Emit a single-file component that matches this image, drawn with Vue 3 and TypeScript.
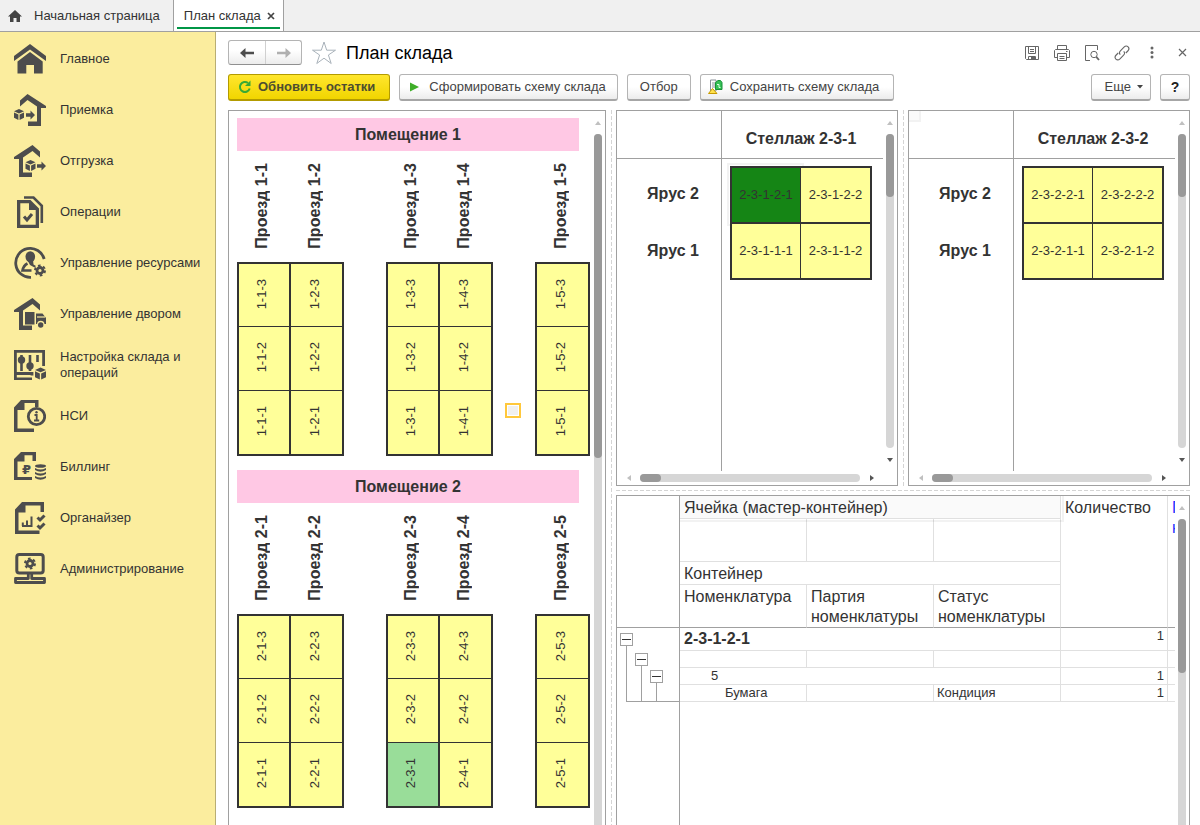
<script setup lang="ts">
interface MenuItem {
  label: string
  icon: string
}

interface Aisle {
  name: string
  cells: string[]
}

interface Room {
  name: string
  groups: Aisle[][]
}

interface Rack {
  name: string
  tiers: { name: string; cells: string[] }[]
}

const box =
  'M5 0L10 2.2L5 4.4L0 2.2ZM0 3.4L4.4 5.4V11L0 8.8ZM10 3.4L5.6 5.4V11L10 8.8Z'
const yard = '<path d="M18.5 0L26 6.5V12.5L18.5 6L9 12.5V27.5H18V32H5V14H0V12Z"/>'

const gear = (x: number, y: number, r: number): string => {
  const step = (2 * Math.PI * (r + 1)) / 6
  return (
    `<circle cx="${x}" cy="${y}" r="${r - 1}" fill="none" stroke="#4d4d4d" stroke-width="2.8"/>` +
    `<circle cx="${x}" cy="${y}" r="${r + 1}" fill="none" stroke="#4d4d4d" stroke-width="2" stroke-dasharray="${step / 2} ${step / 2}"/>`
  )
}

const menu: MenuItem[] = [
  {
    label: 'Главное',
    icon: '<path d="M16 1L32 13V18L16 6.5L0 18V13Z"/><path d="M16 9L28.7 18.5V30.5H20V22H12.3V30.5H3.5V18.5Z"/>',
  },
  {
    label: 'Приемка',
    icon:
      '<path d="M13.5 0L32 12V14H27V32H14V27.5H23V12.5L13.5 6L6 12.5V6.5Z"/>' +
      `<path transform="translate(0 15)" d="${box}"/>` +
      '<path d="M12 19.3H16.5V16.5L21 21L16.5 25.5V22.7H12Z"/>',
  },
  {
    label: 'Отгрузка',
    icon:
      yard +
      `<path transform="translate(11.5 15)" d="${box}"/>` +
      '<path d="M23 19.3H27.5V16.5L32 21L27.5 25.5V22.7H23Z"/>',
  },
  {
    label: 'Операции',
    icon:
      '<path fill-rule="evenodd" d="M3 4H16.5L25 12.5V32H3ZM6.3 7.3V28.7H21.7V14H15V7.3Z"/>' +
      '<path d="M10 1.5H19.5L27.8 9.8V27" fill="none" stroke="#4d4d4d" stroke-width="2.6"/>' +
      '<path d="M10 20.5L13 24L18 18" fill="none" stroke="#4d4d4d" stroke-width="3"/>',
  },
  {
    label: 'Управление ресурсами',
    icon:
      '<path d="M30.2 12A14.5 14.5 0 1 0 17 30.4" fill="none" stroke="#4d4d4d" stroke-width="2.8"/>' +
      '<ellipse cx="16.3" cy="9.8" rx="4.8" ry="5.6"/><path d="M13.5 13H19L19.5 17.5L22 19L20.5 20.5L16 18Z"/>' +
      '<path d="M13.5 16.5Q9.500 18.500 8.500 23.500H17.500" fill="none" stroke="#4d4d4d" stroke-width="2.6"/>' +
      gear(26, 23.5, 4),
  },
  {
    label: 'Управление двором',
    icon:
      yard +
      '<path d="M11 14H20.5V26.5H11ZM22 15.5H28.5L32 20V26H30.5A3.8 3.8 0 0 0 23 26H22Z"/>' +
      '<path d="M23 19H31" stroke="#fbed9e" stroke-width="1.2"/><circle cx="26.7" cy="27" r="2.7"/>',
  },
  {
    label: 'Настройка склада и операций',
    icon:
      '<path d="M18 26.500V24.500H1.400V2.400H29.600V17M1.400 24V30" fill="none" stroke="#4d4d4d" stroke-width="2.800"/>' +
      '<path d="M0 28.500H18V31H0Z"/><path d="M7.500 6V22M16 6V22M23.500 6V13" stroke="#4d4d4d" stroke-width="2.600"/>' +
      '<circle cx="7.500" cy="11" r="3.700"/><circle cx="16" cy="17" r="3.700"/>' +
      `<path transform="translate(21 18.5) scale(1.1)" d="${box}"/>`,
  },
  {
    label: 'НСИ',
    icon:
      '<path d="M7 0H24.5V7H21V3H10.5V10H3.5V28.5H20V32H0V7.5Z"/>' +
      '<circle cx="22.5" cy="16.5" r="8.2" fill="none" stroke="#4d4d4d" stroke-width="2.8"/>' +
      '<path d="M20.5 15H22.7V20.5M20 20.5H25.2" fill="none" stroke="#4d4d4d" stroke-width="1.8"/><circle cx="22.5" cy="12.3" r="1.2"/>',
  },
  {
    label: 'Биллинг',
    icon:
      '<path d="M7 1H22V10H18.500V4.300H10.500V10.500H3.500V26H18V29H0V8Z"/>' +
      '<text x="8" y="22.5" font-size="13" font-weight="bold" font-family="DejaVu Sans, sans-serif">₽</text>' +
      '<ellipse cx="26.500" cy="15" rx="5.500" ry="1.800"/>' +
      '<path d="M21 17Q26.500 20 32 17V19Q26.500 22.500 21 19ZM21 21Q26.500 24 32 21V23Q26.500 26.500 21 23ZM21 25Q26.500 28 32 25V27Q26.500 30.500 21 27Z"/>',
  },
  {
    label: 'Органайзер',
    icon:
      '<path d="M8 0H30V10H26.5V3.500H11.500V10.500H4.500V28.500H25.500V32H1V7.500Z"/>' +
      '<path d="M8 24H17.500V14.500M13 24V18.500M8.800 24V20.500" fill="none" stroke="#4d4d4d" stroke-width="2"/>' +
      '<path d="M23.500 15.500L26 18L30.500 13.500M23.500 23.500L26 26L30.500 21.500" fill="none" stroke="#4d4d4d" stroke-width="3"/>',
  },
  {
    label: 'Администрирование',
    icon:
      '<rect x="2.800" y="1.500" width="26.400" height="18.500" rx="2.500" fill="none" stroke="#4d4d4d" stroke-width="3"/>' +
      gear(16, 10.5, 4) +
      '<path d="M14.300 20V25.500H1.500V29.500H30.500V25.500H17.700V20" fill="none" stroke="#4d4d4d" stroke-width="2.800" stroke-linejoin="round"/>',
  },
]

const makeRoom = (n: number): Room => ({
  name: `Помещение ${n}`,
  groups: [[1, 2], [3, 4], [5]].map((aisles) =>
    aisles.map((a) => ({
      name: `Проезд ${n}-${a}`,
      cells: [3, 2, 1].map((c) => `${n}-${a}-${c}`),
    })),
  ),
})

const makeRack = (id: string): Rack => ({
  name: `Стеллаж ${id}`,
  tiers: [2, 1].map((t) => ({
    name: `Ярус ${t}`,
    cells: [1, 2].map((c) => `${id}-${t}-${c}`),
  })),
})

const rooms: Room[] = [makeRoom(1), makeRoom(2)]
const racks: Rack[] = [makeRack('2-3-1'), makeRack('2-3-2')]
const selectedSection = '2-3-1'
const selectedCell = '2-3-1-2-1'
</script>

<template>
  <div class="app">
    <nav class="tabs" aria-label="Вкладки">
      <button class="tab" type="button">
        <svg class="home" viewBox="0 0 14 12" width="14" height="12" aria-hidden="true">
          <path d="M7 0L14 6.500H12V12H8.500V8H5.500V12H2V6.500H0Z" fill="#444" />
        </svg>
        Начальная страница
      </button>
      <button class="tab active" type="button">
        План склада
        <svg viewBox="0 0 8 8" width="8" height="8" aria-hidden="true">
          <path d="M1 1L7 7M7 1L1 7" stroke="#444" stroke-width="1.700" />
        </svg>
      </button>
    </nav>

    <div class="body">
      <aside class="sidebar">
        <a v-for="item in menu" :key="item.label" class="menu-item" href="#">
          <svg viewBox="0 0 32 32" width="32" height="32" fill="#4d4d4d" aria-hidden="true" v-html="item.icon"></svg>
          <span>{{ item.label }}</span>
        </a>
      </aside>

      <main class="main">
        <header class="header">
          <div class="history">
            <button type="button" aria-label="Назад">
              <svg viewBox="0 0 14 10" width="14" height="10">
                <path d="M0 5L5.500 0V3.700H14V6.300H5.500V10Z" fill="#4d4d4d" />
              </svg>
            </button>
            <button type="button" aria-label="Вперед">
              <svg viewBox="0 0 14 10" width="14" height="10">
                <path d="M14 5L8.500 0V3.700H0V6.300H8.500V10Z" fill="#b0b0b0" />
              </svg>
            </button>
          </div>
          <button class="plain star" type="button" aria-label="Избранное">
            <svg viewBox="0 0 24 24" width="24" height="24">
              <path
                d="M12 1L14.700 9.200H23.500L16.400 14L19.200 22.500L12 17.200L4.800 22.500L7.600 14L.500 9.200H9.300Z"
                fill="none"
                stroke="#a9b2ba"
              />
            </svg>
          </button>
          <h1>План склада</h1>
          <div class="tools">
            <button class="plain" type="button" aria-label="Сохранить">
              <svg viewBox="0 0 16 16" width="16" height="16" fill="none" stroke="#666">
                <path d="M1.500 1.500H14.500V14.500H2.500L1.500 13.500ZM4.500 1.500V8.500H11.500V1.500M6 4.500H10M6 6.500H10M4.500 14.500V11.500H11.500V14.500" />
                <path d="M7 11.500H11V14H7Z" fill="#666" stroke="none" />
              </svg>
            </button>
            <button class="plain" type="button" aria-label="Печать">
              <svg viewBox="0 0 16 16" width="16" height="16" fill="none" stroke="#666">
                <path d="M3.500 4V.500H12.500V4M3.500 12.500H.500V5.500L1.500 4.500H14.500L15.500 5.500V12.500H12.500M3.500 8.500H12.500V15.500H3.500ZM5.500 11.500H10.500M5.500 13.500H10.500M12 6.500H13.500" />
              </svg>
            </button>
            <button class="plain" type="button" aria-label="Просмотр">
              <svg viewBox="0 0 16 16" width="16" height="16" fill="none" stroke="#666">
                <path d="M6 15.500H1.500V.500H13.500V5" />
                <circle cx="10" cy="9.500" r="3.200" />
                <path d="M12.300 11.800L15 15" stroke-width="1.800" />
              </svg>
            </button>
            <button class="plain" type="button" aria-label="Ссылка">
              <svg viewBox="0 0 16 16" width="16" height="16" fill="none" stroke="#666" stroke-width="1.100">
                <path d="M6.300 9.700C5.100 8.500 5.300 6.900 6.400 5.800L10 2.200C11.300.900 13 .800 14.100 1.900C15.200 3 15.100 4.700 13.800 6L11.800 8" />
                <path d="M9.700 6.300C10.900 7.500 10.700 9.100 9.600 10.200L6 13.800C4.700 15.100 3 15.200 1.900 14.100C.800 13 .900 11.300 2.200 10L4.200 8" />
              </svg>
            </button>
            <button class="plain" type="button" aria-label="Меню">
              <svg viewBox="0 0 16 16" width="16" height="16" fill="#666">
                <circle cx="8" cy="3" r="1.500" />
                <circle cx="8" cy="7.500" r="1.500" />
                <circle cx="8" cy="12" r="1.500" />
              </svg>
            </button>
            <button class="plain" type="button" aria-label="Закрыть">
              <svg viewBox="0 0 16 16" width="16" height="16" stroke="#666" stroke-width="1.200">
                <path d="M5 4L12 11M12 4L5 11" />
              </svg>
            </button>
          </div>
        </header>

        <div class="toolbar">
          <button class="btn primary" type="button">
            <svg viewBox="0 0 14 14" width="14" height="14" fill="none" stroke="#39a935" stroke-width="2" aria-hidden="true">
              <path d="M10 3A5 5 0 1 0 11.700 8.500" />
              <path d="M12.500 .500V6H7Z" fill="#39a935" stroke="none" />
            </svg>
            Обновить остатки
          </button>
          <button class="btn" type="button">
            <svg viewBox="0 0 14 14" width="14" height="14" aria-hidden="true">
              <path d="M1 2.500L10 7L1 11.500Z" fill="#3fae29" />
            </svg>
            Сформировать схему склада
          </button>
          <button class="btn filter" type="button">Отбор</button>
          <button class="btn save" type="button">
            <svg viewBox="0 0 16 16" width="16" height="16" aria-hidden="true">
              <path d="M2.500 1H8V12H2.500Z" fill="#fff" stroke="#8a9199" />
              <path d="M4 4H7M4 6H7M4 8H7" stroke="#8a9199" />
              <path d="M7.500 3.500L10 1.500H12.500L14 3.500V10.500H7.500Z" fill="#35c055" stroke="#189038" />
              <path d="M9 5.500H11V8.500H12.500" fill="none" stroke="#d9ffe0" />
              <path d="M.500 14.500L4.500 9.500L9 14.500Z" fill="#ffe14d" stroke="#c79a00" />
            </svg>
            Сохранить схему склада
          </button>
          <button class="btn more" type="button">
            Еще
            <svg viewBox="0 0 6 4" width="6" height="4" aria-hidden="true"><path d="M0 0H6L3 3.500Z" fill="#444" /></svg>
          </button>
          <button class="btn help" type="button" aria-label="Справка">?</button>
        </div>

        <div class="workspace">
          <section class="pane open plan">
            <div class="view plan-view">
              <div v-for="room in rooms" :key="room.name" class="room">
                <h2>{{ room.name }}</h2>
                <div class="groups">
                  <table v-for="(group, g) in room.groups" :key="g" class="aisles">
                    <thead>
                      <tr>
                        <th v-for="aisle in group" :key="aisle.name" scope="col">
                          <span class="upright">{{ aisle.name }}</span>
                        </th>
                      </tr>
                    </thead>
                    <tbody>
                      <tr v-for="row in 3" :key="row">
                        <td
                          v-for="aisle in group"
                          :key="aisle.name"
                          :class="{ partial: aisle.cells[row - 1] === selectedSection }"
                        >
                          <span class="upright">{{ aisle.cells[row - 1] }}</span>
                        </td>
                      </tr>
                    </tbody>
                  </table>
                </div>
              </div>
              <span class="cursor"></span>
            </div>
            <div class="vbar">
              <span class="arrow up"></span>
              <div class="track"><div class="thumb" :style="{ height: '324px' }"></div></div>
            </div>
          </section>

          <div class="split vertical"></div>

          <div class="right">
            <div class="racks">
              <template v-for="(rack, r) in racks" :key="rack.name">
                <div v-if="r > 0" class="split vertical"></div>
                <section class="pane rack-pane">
                  <div class="view">
                    <table class="rack">
                      <colgroup>
                        <col class="c-tier" />
                        <col class="c-gap" />
                        <col class="c-left" />
                        <col class="c-right" />
                        <col />
                      </colgroup>
                      <thead>
                        <tr>
                          <td class="side"></td>
                          <td></td>
                          <th colspan="2" scope="colgroup">{{ rack.name }}</th>
                          <td></td>
                        </tr>
                      </thead>
                      <tbody>
                        <tr class="spacer"><td class="side"></td><td colspan="4"></td></tr>
                        <tr v-for="tier in rack.tiers" :key="tier.name" class="tier">
                          <th class="side" scope="row">{{ tier.name }}</th>
                          <td></td>
                          <td
                            v-for="cell in tier.cells"
                            :key="cell"
                            class="cell"
                            :class="{ selected: cell === selectedCell }"
                          >
                            {{ cell }}
                          </td>
                          <td></td>
                        </tr>
                        <tr><td class="side"></td><td colspan="4"></td></tr>
                      </tbody>
                    </table>
                    <span v-if="r > 0" class="corner-mark"></span>
                  </div>
                  <div class="vbar">
                    <span class="arrow up"></span>
                    <div class="track"><div class="thumb" :style="{ height: '63px' }"></div></div>
                    <span class="arrow down"></span>
                  </div>
                  <div class="hbar">
                    <span class="arrow left"></span>
                    <div class="track"><div class="thumb" :style="{ width: '21px' }"></div></div>
                    <span class="arrow right-arrow"></span>
                  </div>
                </section>
              </template>
            </div>

            <div class="split horizontal"></div>

            <section class="pane open">
              <div class="view">
                <table class="stock">
                  <colgroup>
                    <col class="s-tree" />
                    <col class="s-col" />
                    <col class="s-col" />
                    <col class="s-col" />
                    <col class="s-num" />
                    <col />
                  </colgroup>
                  <thead>
                    <tr class="h-low">
                      <td rowspan="4" class="gutter"></td>
                      <th colspan="3" class="picked">Ячейка (мастер-контейнер)</th>
                      <th rowspan="4">Количество</th>
                      <th rowspan="4" class="clipped">П<br />н</th>
                    </tr>
                    <tr class="h-high"><td></td><td></td><td></td></tr>
                    <tr class="h-low"><th colspan="3">Контейнер</th></tr>
                    <tr class="h-high">
                      <th>Номенклатура</th>
                      <th>Партия номенклатуры</th>
                      <th>Статус номенклатуры</th>
                    </tr>
                  </thead>
                  <tbody>
                    <tr class="b-high">
                      <td rowspan="4" class="gutter">
                        <div class="tree">
                          <div v-for="level in 3" :key="level" class="branch">
                            <button type="button" aria-label="Свернуть"></button>
                          </div>
                        </div>
                      </td>
                      <td colspan="3" class="group-name">2-3-1-2-1</td>
                      <td class="num">1</td>
                      <td></td>
                    </tr>
                    <tr class="b-low"><td></td><td></td><td></td><td></td><td></td></tr>
                    <tr class="b-low">
                      <td colspan="3" class="level-2">5</td>
                      <td class="num">1</td>
                      <td></td>
                    </tr>
                    <tr class="b-low">
                      <td class="level-3">Бумага</td>
                      <td></td>
                      <td>Кондиция</td>
                      <td class="num">1</td>
                      <td></td>
                    </tr>
                    <tr class="rest"><td class="gutter"></td><td colspan="5"></td></tr>
                  </tbody>
                </table>
              </div>
              <div class="vbar">
                <span class="arrow up"></span>
                <div class="track"><div class="thumb" :style="{ height: '154px' }"></div></div>
              </div>
            </section>
          </div>
        </div>
      </main>
    </div>
  </div>
</template>

<style>
body {
  margin: 0;
}
</style>

<style scoped>
.app {
  display: flex;
  flex-direction: column;
  height: 100vh;
  overflow: hidden;
  background: #fff;
  color: #333;
  font: 13px/16px "Liberation Sans", Arial, sans-serif;
}

.app * {
  box-sizing: border-box;
}

button {
  font: inherit;
  color: inherit;
  padding: 0;
  cursor: pointer;
}

table {
  border-collapse: separate;
  border-spacing: 0;
}

th,
td {
  padding: 0;
}

/* tabs */
.tabs {
  display: flex;
  flex: none;
  height: 32px;
  background: #f0f0f0;
  border-bottom: 1px solid #a0a0a0;
}

.tab {
  position: relative;
  display: flex;
  align-items: center;
  gap: 6px;
  padding: 0 13px 0 8px;
  border: 0;
  background: none;
  white-space: nowrap;
}

.home {
  margin-right: 6px;
}

.tab.active {
  padding: 0 8px 0 10px;
  background: #fff;
  border: solid #a0a0a0;
  border-width: 0 1px;
}

.tab.active::after {
  content: "";
  position: absolute;
  left: 3px;
  right: 3px;
  bottom: 2px;
  height: 2px;
  background: #009646;
}

/* sidebar */
.body {
  display: flex;
  flex: 1;
  min-height: 0;
}

.sidebar {
  flex: none;
  width: 216px;
  padding-top: 1px;
  background: #fbed9e;
  border-right: 1px solid #b9ae73;
}

.menu-item {
  display: flex;
  align-items: center;
  gap: 14px;
  height: 51px;
  padding: 0 14px;
  color: #333;
  text-decoration: none;
}

.menu-item svg {
  flex: none;
}

/* header */
.main {
  display: flex;
  flex: 1;
  flex-direction: column;
  min-width: 0;
  padding: 8px 10px 0 12px;
}

.header {
  display: flex;
  flex: none;
  align-items: center;
  height: 25px;
  margin-bottom: 9px;
}

.history {
  display: flex;
  height: 25px;
  border: 1px solid #b4b4b4;
  border-bottom-color: #909090;
  border-radius: 3px;
  background: linear-gradient(#fff 40%, #ececec);
}

.history button {
  display: grid;
  place-items: center;
  width: 36px;
  border: 0;
  background: none;
}

.history button + button {
  border-left: 1px solid #d0d0d0;
}

.plain {
  display: grid;
  place-items: center;
  border: 0;
  background: none;
}

.star {
  margin: 0 10px;
}

h1 {
  margin: 0;
  color: #000;
  font-size: 18px;
  font-weight: 400;
  line-height: 24px;
}

.tools {
  display: flex;
  gap: 14px;
  margin-left: auto;
}

/* toolbar */
.toolbar {
  display: flex;
  flex: none;
  gap: 9px;
  margin-bottom: 9px;
}

.btn {
  display: flex;
  align-items: center;
  gap: 6px;
  height: 27px;
  padding: 0 11px 0 9px;
  border: 1px solid #b4b4b4;
  border-bottom: 2px solid #a6a6a6;
  border-radius: 3px;
  background: linear-gradient(#fff 50%, #ececec);
  color: #444;
  white-space: nowrap;
}

.btn.filter {
  padding: 0 12px;
}

.btn.primary {
  padding-right: 14px;
  border-color: #b39b00;
  background: linear-gradient(#ffe62e, #f1d500);
  color: #4d4d30;
  font-weight: 700;
}

.btn.save {
  padding: 0 14px 0 7px;
}

.btn.more {
  margin-left: auto;
  padding: 0 7px 0 13px;
}

.btn.help {
  justify-content: center;
  width: 30px;
  padding: 0;
  color: #222;
  font-size: 14px;
  font-weight: 700;
}

/* panes */
.workspace {
  display: grid;
  flex: 1;
  grid-template-columns: 378fr 10px 574fr;
  grid-template-rows: minmax(0, 1fr);
  min-height: 0;
}

.right {
  display: grid;
  grid-template-columns: minmax(0, 1fr);
  grid-template-rows: auto 9px minmax(0, 1fr);
  min-width: 0;
}

.racks {
  display: grid;
  grid-template-columns: 1fr 10px 1fr;
}

.pane {
  display: grid;
  grid-template-columns: minmax(0, 1fr) 14px;
  grid-template-rows: minmax(0, 1fr);
  min-width: 0;
  border: 1px solid #a0a0a0;
}

.pane.open {
  border-bottom: 0;
}

.rack-pane {
  grid-template-rows: 360px 14px;
}

.view {
  position: relative;
  overflow: hidden;
}

.split.vertical {
  width: 1px;
  margin-left: 5px;
  background: repeating-linear-gradient(#d4d4d4 0 4px, #fff 4px 6px);
}

.split.horizontal {
  height: 1px;
  margin-top: 4px;
  background: repeating-linear-gradient(90deg, #d4d4d4 0 4px, #fff 4px 6px);
}

/* scroll bars */
.vbar {
  display: flex;
  flex-direction: column;
  align-items: center;
}

.hbar {
  display: flex;
  align-items: center;
}

.track {
  flex: 1;
  border-radius: 4px;
  background: #d6d6d6;
}

.thumb {
  border-radius: 4px;
  background: #999;
}

.vbar .track,
.vbar .thumb {
  width: 8px;
}

.hbar .track,
.hbar .thumb {
  height: 8px;
}

.open .track {
  border-radius: 4px 4px 0 0;
}

.arrow {
  display: grid;
  flex: none;
  place-items: center;
  width: 23px;
  height: 23px;
}

.arrow::before {
  content: "";
  border: 3px solid transparent;
}

.vbar .arrow {
  width: 14px;
}

.arrow.up::before {
  border-top: 0;
  border-bottom: 4px solid #c0c0c0;
}

.arrow.down::before {
  border-bottom: 0;
  border-top: 4px solid #555;
}

.arrow.left::before {
  border-left: 0;
  border-right: 4px solid #c0c0c0;
}

.arrow.right-arrow::before {
  border-right: 0;
  border-left: 4px solid #555;
}

/* warehouse plan */
.plan-view {
  padding: 7px 0 0 8px;
}

.room {
  margin-bottom: 14px;
}

h2 {
  width: 342px;
  margin: 0;
  background: #ffc8e4;
  font-size: 16px;
  line-height: 33px;
  text-align: center;
}

.groups {
  display: flex;
  gap: 42px;
}

.aisles th {
  height: 111px;
  padding: 0 3px 2px 0;
  font-size: 16px;
  line-height: 18px;
}

.aisles td {
  width: 52px;
  height: 64px;
  padding: 0 4px 2px 0;
  border: solid #333;
  border-width: 1px 0 0 2px;
  background: #ffff99;
  text-align: center;
}

.aisles td:last-child {
  width: 55px;
  border-right-width: 2px;
}

.aisles tbody tr:first-child td {
  border-top-width: 2px;
}

.aisles tbody tr:last-child td {
  height: 66px;
  border-bottom-width: 2px;
}

.aisles td.partial {
  background: #99dd99;
}

.upright {
  display: inline-block;
  writing-mode: vertical-rl;
  transform: rotate(180deg);
  vertical-align: middle;
  white-space: nowrap;
}

.cursor {
  position: absolute;
  left: 276px;
  top: 292px;
  width: 16px;
  height: 15px;
  border: 2px solid #ffc83c;
  background: #f0f0f0;
  box-shadow: inset 0 0 0 1px #fff;
}

/* racks */
.rack {
  width: 100%;
  height: 100%;
  table-layout: fixed;
}

.c-tier {
  width: 105px;
}

.c-gap {
  width: 8px;
}

.c-left {
  width: 70px;
}

.c-right {
  width: 72px;
}

.rack th {
  font-size: 16px;
  line-height: 20px;
  white-space: nowrap;
}

.rack thead th,
.rack thead td {
  height: 48px;
  padding-top: 8px;
  border-bottom: 1px solid #a0a0a0;
}

.rack .side {
  padding-left: 8px;
  border-right: 1px solid #a0a0a0;
}

.spacer td {
  height: 7px;
}

.tier td,
.tier th {
  height: 56px;
}

.tier:nth-child(3) td,
.tier:nth-child(3) th {
  height: 58px;
}

.tier .cell {
  position: relative;
  border: solid #333;
  border-width: 2px 0 0 2px;
  background: #ffff99;
  text-align: center;
}

.tier .cell + .cell {
  border-width: 2px 2px 0 1px;
}

.tier:nth-child(3) .cell {
  border-bottom-width: 2px;
}

.tier .cell.selected {
  background: #158515;
}

.cell.selected::after {
  content: "";
  position: absolute;
  inset: -5px -4px -4px -5px;
  border: 2px solid rgb(0 0 0 / 5%);
}

.corner-mark {
  position: absolute;
  left: 0;
  top: 0;
  width: 12px;
  height: 11px;
  border: solid #f2f2f2;
  border-width: 0 2px 2px 0;
  background: #fafafa;
}

/* stock table */
.stock {
  width: 100%;
  height: 100%;
  table-layout: fixed;
}

.s-tree {
  width: 63px;
}

.s-col {
  width: 127px;
}

.s-num {
  width: 107px;
}

.stock th,
.stock td {
  border: solid #e0e0e0;
  border-width: 0 1px 1px 0;
  text-align: left;
}

.stock th {
  padding: 2px 0 0 4px;
  font-size: 16px;
  font-weight: 400;
  line-height: 20px;
  vertical-align: top;
}

.stock td {
  padding-left: 3px;
}

.stock th:last-child,
.stock td:last-child {
  overflow: hidden;
}

.h-low > *,
.b-high > * {
  height: 23px;
}

.h-high > * {
  height: 43px;
}

.b-low > * {
  height: 17px;
}

.stock thead tr:last-child > *,
.stock thead [rowspan] {
  border-bottom-color: #a0a0a0;
}

.stock .gutter {
  padding: 0;
  border-right-color: #a0a0a0;
  vertical-align: top;
}

.stock tbody .gutter {
  border-bottom: 0;
}

.stock .picked {
  position: relative;
  background: #fafafa;
}

.picked::after {
  content: "";
  position: absolute;
  inset: 0 -4px -4px 0;
  border: solid rgb(0 0 0 / 5%);
  border-width: 0 2px 2px 0;
}

.stock .clipped {
  border-right: 0;
  color: #1f2fff;
}

.stock tbody td:last-child {
  border-right: 0;
}

.stock .group-name {
  padding-left: 4px;
  font-size: 16px;
  font-weight: 700;
}

.stock .num {
  padding-right: 3px;
  text-align: right;
  vertical-align: top;
}

.stock .level-2 {
  padding-left: 31px;
}

.stock .level-3 {
  padding-left: 45px;
}

.stock .rest td {
  border-bottom: 0;
}

.tree {
  position: relative;
  display: flex;
  gap: 2px;
  height: 74px;
  margin-left: 3px;
}

.tree::after {
  content: "";
  position: absolute;
  left: 6px;
  right: 0;
  bottom: 0;
  height: 1px;
  background: #a0a0a0;
}

.branch {
  width: 13px;
  padding-top: 5px;
  background: linear-gradient(#a0a0a0, #a0a0a0) 6px 18px / 1px 100% no-repeat;
}

.branch:nth-child(2) {
  padding-top: 25px;
  background-position: 6px 38px;
}

.branch:nth-child(3) {
  padding-top: 42px;
  background-position: 6px 55px;
}

.branch button {
  display: grid;
  place-items: center;
  width: 13px;
  height: 13px;
  border: 1px solid #a0a0a0;
  background: #fff;
}

.branch button::before {
  content: "";
  width: 9px;
  height: 1px;
  background: #333;
}
</style>
